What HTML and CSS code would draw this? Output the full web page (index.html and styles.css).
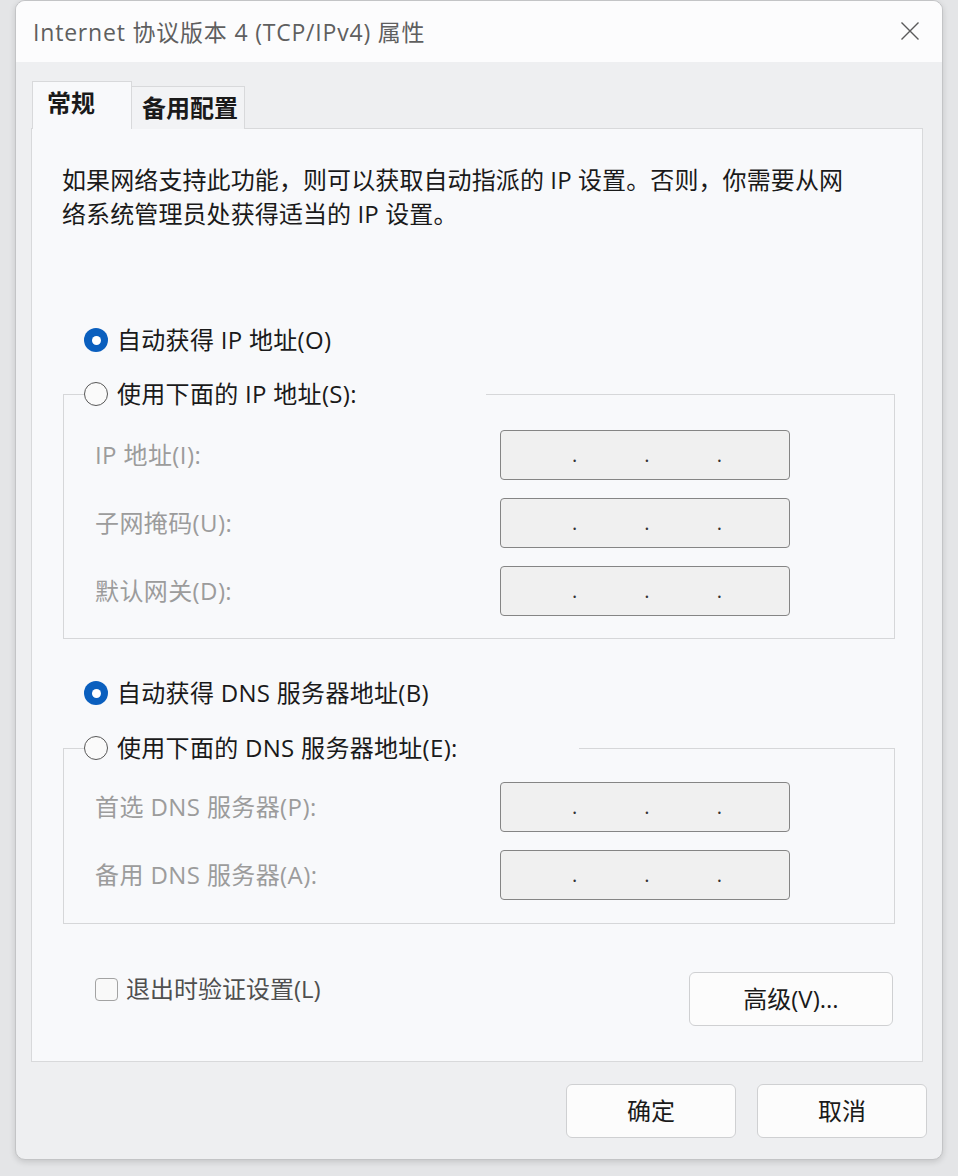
FILE: index.html
```html
<!DOCTYPE html>
<html lang="zh-CN">
<head>
<meta charset="utf-8">
<title>Internet 协议版本 4 (TCP/IPv4) 属性</title>
<link rel="stylesheet" href="styles.css">
</head>
<body>
<div class="window">
  <div class="titlebar">
    <span class="title">Internet 协议版本 4 (TCP/IPv4) 属性</span>
    <svg class="close" width="20" height="20" viewBox="0 0 20 20"><path d="M1.5 1.5 L18.5 18.5 M18.5 1.5 L1.5 18.5" stroke="#5a5a5a" stroke-width="1.4" fill="none"/></svg>
  </div>
  <div class="content">
    <div class="tabs">
      <div class="tab active">常规</div>
      <div class="tab">备用配置</div>
    </div>
    <div class="panel">
      <p class="intro">如果网络支持此功能，则可以获取自动指派的 IP 设置。否则，你需要从网<br>络系统管理员处获得适当的 IP 设置。</p>

      <div class="radio-row r1"><span class="radio on"></span><span>自动获得 IP 地址(O)</span></div>

      <fieldset class="group g1">
        <legend class="radio-row legend-ip"><span class="radio"></span><span>使用下面的 IP 地址(S):</span></legend>
        <div class="field"><span class="label">IP 地址(I):</span><div class="ipbox"><span>.</span><span>.</span><span>.</span></div></div>
        <div class="field"><span class="label">子网掩码(U):</span><div class="ipbox"><span>.</span><span>.</span><span>.</span></div></div>
        <div class="field"><span class="label">默认网关(D):</span><div class="ipbox"><span>.</span><span>.</span><span>.</span></div></div>
      </fieldset>

      <div class="radio-row r3"><span class="radio on"></span><span>自动获得 DNS 服务器地址(B)</span></div>

      <fieldset class="group g2">
        <legend class="radio-row legend-dns"><span class="radio"></span><span>使用下面的 DNS 服务器地址(E):</span></legend>
        <div class="field"><span class="label">首选 DNS 服务器(P):</span><div class="ipbox"><span>.</span><span>.</span><span>.</span></div></div>
        <div class="field"><span class="label">备用 DNS 服务器(A):</span><div class="ipbox"><span>.</span><span>.</span><span>.</span></div></div>
      </fieldset>

      <div class="footer-row">
        <div class="check"><span class="box"></span><span>退出时验证设置(L)</span></div>
        <button class="btn adv">高级(V)...</button>
      </div>
    </div>
    <div class="actions">
      <button class="btn act">确定</button>
      <button class="btn act">取消</button>
    </div>
  </div>
</div>
</body>
</html>
```

FILE: styles.css
```css
* { box-sizing: border-box; }

html, body {
  margin: 0;
  padding: 0;
}

body {
  background: #e4e5e7;
  font-family: "Open Sans", "Noto Sans CJK SC", sans-serif;
  color: #1a1a1a;
  width: 958px;
  height: 1176px;
  overflow: hidden;
}

.window {
  margin-left: 15px;
  width: 928px;
  background: #eeeff1;
  border: 1px solid #c3c4c6;
  border-radius: 10px;
  box-shadow: 0 2px 6px rgba(0, 0, 0, 0.14);
  overflow: hidden;
}

.titlebar {
  height: 61px;
  background: #fcfcfd;
  display: flex;
  align-items: center;
  justify-content: space-between;
  padding: 0 22px 0 17px;
}

.title {
  font-size: 23px;
  letter-spacing: 0.8px;
  line-height: 30px;
  color: #5f5f5f;
  margin-top: 1px;
}

.close {
  display: block;
  margin-top: -2px;
}

.content {
  padding: 19px 19px 21px 15px;
}

.tabs {
  display: flex;
  align-items: flex-end;
  margin-left: 1px;
  margin-bottom: -1px;
}

.tab {
  font-size: 24px;
  font-weight: 700;
  color: #1a1a1a;
  border: 1px solid #d8d9db;
  border-bottom: none;
}

.tab.active {
  position: relative;
  z-index: 1;
  height: 48px;
  width: 100px;
  padding: 4px 0 0 14px;
  line-height: 34px;
  background: #f8f9fb;
}

.tab:not(.active) {
  height: 43px;
  width: 113px;
  border-left: none;
  padding: 4px 0 0 10px;
  line-height: 34px;
  background: #f2f3f5;
}

.panel {
  background: #f8f9fb;
  border: 1px solid #d8d9db;
  padding: 34px 0 35px 30px;
}

.intro {
  margin: 0;
  font-size: 24px;
  line-height: 34px;
  letter-spacing: 0.1px;
}

.radio-row {
  display: flex;
  align-items: center;
  height: 34px;
  font-size: 24px;
  line-height: 34px;
  letter-spacing: 0.3px;
  gap: 9px;
}

.r1 { margin: 92px 0 0 22px; }
.r3 { margin: 37px 0 0 22px; }

.radio {
  width: 24px;
  height: 24px;
  border-radius: 50%;
  border: 1.5px solid #575757;
  background: #fafafa;
  flex: none;
  position: relative;
}

.radio.on {
  border: none;
  background: #0a5fbe;
}

.radio.on::after {
  content: "";
  position: absolute;
  left: 7.5px;
  top: 7.5px;
  width: 9px;
  height: 9px;
  border-radius: 50%;
  background: #ffffff;
}

.group {
  margin: 0 0 0 1px;
  width: 832px;
  border: 1px solid #d6d7d9;
  padding: 19px 0 22px 31px;
  min-width: 0;
}

.g1 { margin-top: 20px; }
.g2 { margin-top: 21px; padding-top: 17px; padding-bottom: 23px; }

.group legend {
  padding: 0;
  margin-left: -11px;
}

.legend-ip { width: 402px; }
.legend-dns { width: 495px; }

.field {
  display: flex;
  align-items: center;
  height: 50px;
}

.field + .field { margin-top: 18px; }

.label {
  width: 405px;
  font-size: 24px;
  letter-spacing: 0.4px;
  color: #9c9c9c;
  line-height: 30px;
}

.ipbox {
  width: 290px;
  height: 50px;
  border: 1.5px solid #858585;
  border-radius: 4px;
  background: #f0f0f0;
  display: flex;
  justify-content: space-evenly;
  align-items: center;
  padding-left: 4px;
  font-size: 20px;
  line-height: 20px;
  color: #333;
}

.footer-row {
  margin: 48px 0 0 1px;
  width: 832px;
  padding: 0 2px 0 32px;
  display: flex;
  justify-content: space-between;
  align-items: flex-start;
}

.check {
  display: flex;
  align-items: center;
  gap: 8px;
  height: 34px;
  font-size: 24px;
  line-height: 34px;
  color: #4f4f4f;
}

.check .box {
  width: 23px;
  height: 23px;
  border: 1.5px solid #a3a3a3;
  border-radius: 4px;
  background: #f9f9f9;
}

.btn {
  font-family: "Open Sans", "Noto Sans CJK SC", sans-serif;
  font-size: 24px;
  color: #1a1a1a;
  background: #fcfcfc;
  border: 1px solid #cfd0d2;
  border-radius: 6px;
  height: 54px;
  padding: 0;
  line-height: 34px;
}

.adv { width: 204px; }

.actions {
  display: flex;
  justify-content: flex-end;
  gap: 21px;
  margin-top: 22px;
  margin-right: -4px;
}

.act { width: 170px; }
```
